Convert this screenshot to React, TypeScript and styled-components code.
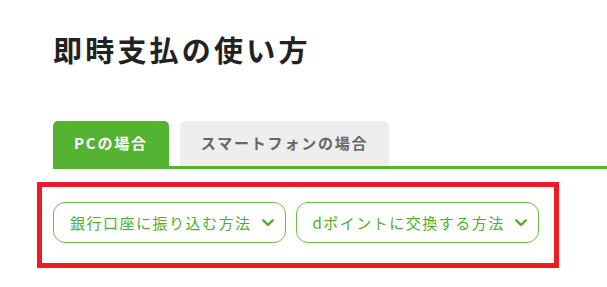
import React from "react";
import styled, { createGlobalStyle } from "styled-components";

const GlobalStyle = createGlobalStyle`
  html, body { margin: 0; padding: 0; background: #ffffff; }
  body { font-family: "Noto Sans CJK JP", "Noto Sans", sans-serif; }
`;

const Page = styled.div`
  padding: 27px 0 0 53px;
  box-sizing: border-box;
  width: 607px;
`;

const Title = styled.h1`
  margin: 0;
  font-size: 29px;
  line-height: 44px;
  font-weight: 700;
  letter-spacing: 3.2px;
  color: #222222;
`;

const TabBar = styled.div`
  margin-top: 50px;
  display: flex;
  gap: 11px;
  border-bottom: 3px solid #55b332;
`;

const Tab = styled.div<{ $active?: boolean }>`
  height: 45px;
  box-sizing: border-box;
  padding: 0 21px 3px 21px;
  display: flex;
  align-items: center;
  border-radius: 5px 5px 0 0;
  font-size: 15px;
  font-weight: 700;
  letter-spacing: 1.8px;
  background: ${(p) => (p.$active ? "#55b332" : "#eeeeee")};
  color: ${(p) => (p.$active ? "#ffffff" : "#666666")};
`;

const Highlight = styled.div`
  margin: 13px 0 0 -16px;
  width: 522px;
  box-sizing: border-box;
  border: 5px solid #ed1c24;
  padding: 15px 11px 20px 11px;
  display: flex;
  gap: 10px;
`;

const AnchorButton = styled.a`
  display: flex;
  align-items: center;
  gap: 10px;
  height: 41px;
  box-sizing: border-box;
  padding: 0 11px 0 16px;
  border: 1px solid #6cbd48;
  border-radius: 12px;
  color: #4fae2e;
  font-size: 15px;
  letter-spacing: 1.5px;
  text-decoration: none;
  white-space: nowrap;
`;

const Chevron = () => (
  <svg width="12" height="8" viewBox="0 0 12 8" aria-hidden="true">
    <path
      d="M1.3 1.3 L6 6 L10.7 1.3"
      fill="none"
      stroke="#4fae2e"
      strokeWidth="2.4"
      strokeLinecap="round"
      strokeLinejoin="round"
    />
  </svg>
);

export default function App() {
  return (
    <>
      <GlobalStyle />
      <Page>
        <Title>即時支払の使い方</Title>
        <TabBar>
          <Tab $active>PCの場合</Tab>
          <Tab>スマートフォンの場合</Tab>
        </TabBar>
        <Highlight>
          <AnchorButton href="#bank">
            <span>銀行口座に振り込む方法</span>
            <Chevron />
          </AnchorButton>
          <AnchorButton href="#dpoint">
            <span>dポイントに交換する方法</span>
            <Chevron />
          </AnchorButton>
        </Highlight>
      </Page>
    </>
  );
}
